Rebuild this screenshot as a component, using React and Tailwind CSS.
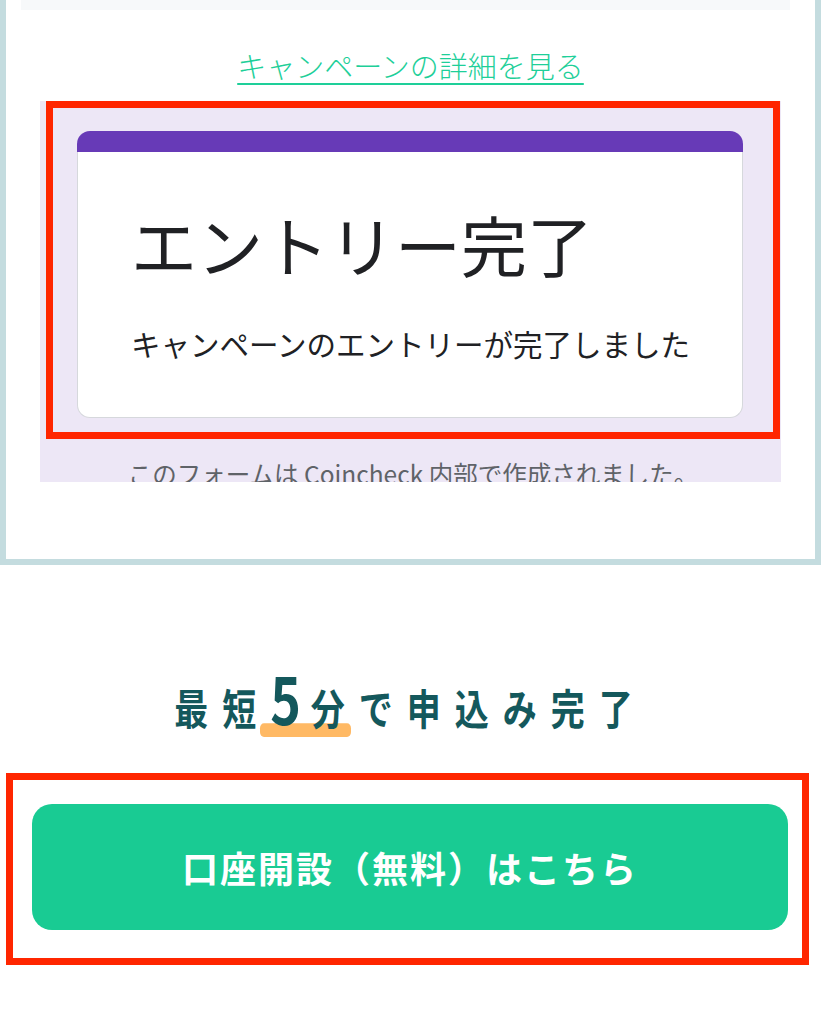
const jp = "font-['Noto_Sans_CJK_JP',sans-serif]";

function EntryCard() {
  return (
    <div>
      <div className="h-[21px] rounded-t-[13px] bg-[#673ab7]" />
      <div className="rounded-b-[13px] border-x border-b border-[#d6d8dc] bg-white pl-[53px] pt-[51px] pb-[54px] text-[#202124]">
        <h1 className="text-[66px] leading-[80px] font-normal">エントリー完了</h1>
        <p className="mt-[40px] text-[29.5px] leading-[40px]">キャンペーンのエントリーが完了しました</p>
      </div>
    </div>
  );
}

export default function App() {
  return (
    <div className={`${jp} min-h-[1024px] bg-white`}>
      <div className="border-x-[6px] border-b-[6px] border-[#c4dcdf] pb-[77px]">
        <div className="ml-[15px] mr-[25px] h-[10px] bg-[#f7f9fa]" />
        <div className="mt-[35px] text-center">
          <a href="#" className="text-[29px] leading-[40px] font-light text-[#1ecf99] underline decoration-[2px] underline-offset-[5px]">
            キャンペーンの詳細を見る
          </a>
        </div>

        <div className="mx-[34px] mt-[16px] bg-[#ede7f6] pl-[6px] pr-[1px]">
          <div className="border-[7px] border-[#ff2600] pt-[23px] pb-[14px] pl-[24px] pr-[30px]">
            <EntryCard />
          </div>
          <div className="h-[43px] overflow-hidden pt-[19px] text-center text-[24.5px] leading-[32px] text-[#5f6368]">
            このフォームは Coincheck 内部で作成されました。
          </div>
        </div>
      </div>

      <div className="mt-[103px] scale-y-[1.25] text-center text-[34px] leading-[60px] font-bold tracking-[14px] text-[#14585c]">
        最短
        <span className="relative inline-block">
          <span className="absolute left-[-10px] right-[8px] top-[51px] h-[11px] rounded-[4px] bg-[#ffb964]" />
          <span className="relative text-[52px] tracking-[10px]">5</span>
          <span className="relative">分</span>
        </span>
        で申込み完了
      </div>

      <div className="mx-[6px] mt-[37px] w-[803px] border-[7px] border-[#ff2600] pt-[24px] pb-[28px] pl-[19px] pr-[14px]">
        <button className="flex h-[126px] w-full items-center justify-center rounded-[20px] bg-[#19cb93] text-[36px] font-bold tracking-[2px] text-white">
          口座開設（無料）はこちら
        </button>
      </div>
    </div>
  );
}
